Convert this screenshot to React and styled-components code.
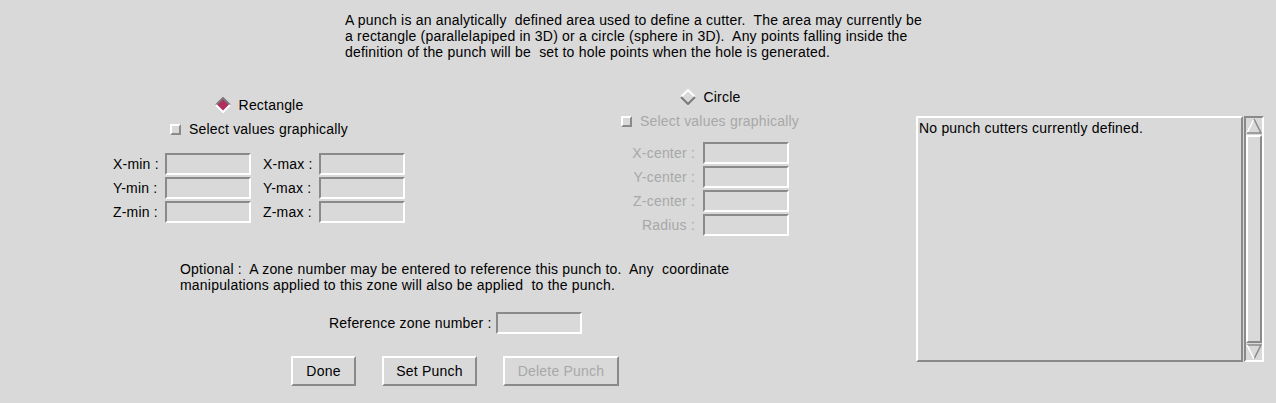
import React from 'react';
import styled, { createGlobalStyle } from 'styled-components';

const GlobalStyle = createGlobalStyle`
  body {
    margin: 0;
    background: #d9d9d9;
    font-family: "Liberation Sans", Arial, sans-serif;
    font-size: 14px;
    letter-spacing: 0.2px;
    color: #000;
  }
`;

const Page = styled.div`
  width: 1276px;
  height: 403px;
  background: #d9d9d9;
  position: relative;
  overflow: hidden;
`;

const Intro = styled.div`
  padding: 12px 0 0 345px;
  line-height: 16px;
  white-space: pre;
`;

const Body = styled.div`
  display: flex;
  margin-top: 29px;
`;

const LeftSide = styled.div`
  width: 916px;
  display: flex;
  flex-direction: column;
`;

const PanelRow = styled.div`
  display: flex;
`;

const Panel = styled.div`
  width: ${p => p.$width}px;
  margin-left: ${p => p.$left}px;
  margin-top: ${p => p.$top}px;
  display: flex;
  flex-direction: column;
  align-items: center;
`;

const ToggleRow = styled.div`
  display: flex;
  align-items: center;
  height: 16px;
  gap: 8px;
  margin-bottom: 8px;
  color: ${p => (p.$dim ? '#a8a8a8' : 'inherit')};
`;

const CheckBox = styled.span`
  width: 7px;
  height: 7px;
  background: #d9d9d9;
  border: 2px solid;
  border-color: #fff #8a8a8a #8a8a8a #fff;
`;

const FieldGrid = styled.div`
  display: grid;
  grid-template-columns: ${p => p.$cols};
  row-gap: 2px;
  align-items: center;
  margin-top: ${p => p.$top}px;
  color: ${p => (p.$dim ? '#a8a8a8' : 'inherit')};
`;

const FieldLabel = styled.span`
  text-align: ${p => (p.$right ? 'right' : 'left')};
  padding-right: ${p => (p.$right ? 8 : 0)}px;
  padding-left: ${p => p.$indent || 0}px;
`;

const Field = styled.div`
  width: 82px;
  height: 18px;
  border: 2px solid;
  border-color: #8a8a8a #fff #fff #8a8a8a;
  background: #d9d9d9;
`;

const Optional = styled.div`
  margin: 25px 0 0 180px;
  line-height: 16px;
  white-space: pre;
`;

const RefRow = styled.div`
  display: flex;
  align-items: center;
  margin: 19px 0 0 329px;
  gap: 4px;
`;

const ButtonRow = styled.div`
  display: flex;
  margin: 22px 0 0 291px;
  gap: 26px;
`;

const Button = styled.div`
  width: ${p => p.$w}px;
  height: 26px;
  box-sizing: content-box;
  border: 2px solid;
  border-color: #fff #8a8a8a #8a8a8a #fff;
  display: flex;
  align-items: center;
  justify-content: center;
  color: ${p => (p.$disabled ? '#a8a8a8' : '#000')};
`;

const ListArea = styled.div`
  display: flex;
  margin-top: 27px;
  gap: 1px;
`;

const ListBox = styled.div`
  width: 322px;
  height: 242px;
  border: 2px solid;
  border-color: #fff #8a8a8a #8a8a8a #fff;
  padding: 0 0 0 1px;
  line-height: 20px;
`;

const ScrollBar = styled.div`
  width: 16px;
  height: 242px;
  border: 2px solid;
  border-color: #8a8a8a #fff #fff #8a8a8a;
  display: flex;
  flex-direction: column;
`;

const Thumb = styled.div`
  flex: 1;
  border: 2px solid;
  border-color: #fff #8a8a8a #8a8a8a #fff;
  margin: 1px 0;
`;

const Diamond = ({ on }) => (
  <svg width="16" height="16" viewBox="0 0 16 16">
    <polygon points="8,1 15,8 8,15 1,8" fill={on ? '#b03060' : '#d9d9d9'} />
    <polyline points="1,8 8,1 15,8" fill="none" stroke={on ? '#7a7a7a' : '#fff'} strokeWidth="2" />
    <polyline points="1,8 8,15 15,8" fill="none" stroke={on ? '#fff' : '#7a7a7a'} strokeWidth="2" />
  </svg>
);

const Arrow = ({ down }) => (
  <svg width="16" height="16" viewBox="0 0 16 16">
    {down ? (
      <>
        <polygon points="1,1 15,1 8,15" fill="#d9d9d9" />
        <polyline points="1,1 15,1 8,15" fill="none" stroke="#8a8a8a" strokeWidth="1.5" />
        <line x1="1" y1="1" x2="8" y2="15" stroke="#fff" strokeWidth="1.5" />
      </>
    ) : (
      <>
        <polygon points="8,1 15,15 1,15" fill="#d9d9d9" />
        <polyline points="1,15 8,1" fill="none" stroke="#fff" strokeWidth="1.5" />
        <polyline points="8,1 15,15 1,15" fill="none" stroke="#8a8a8a" strokeWidth="1.5" />
      </>
    )}
  </svg>
);

const intro =
  'A punch is an analytically  defined area used to define a cutter.  The area may currently be\n' +
  'a rectangle (parallelapiped in 3D) or a circle (sphere in 3D).  Any points falling inside the\n' +
  'definition of the punch will be  set to hole points when the hole is generated.';

const optional =
  'Optional :  A zone number may be entered to reference this punch to.  Any  coordinate\n' +
  'manipulations applied to this zone will also be applied  to the punch.';

export default function App() {
  return (
    <Page>
      <GlobalStyle />
      <Intro>{intro}</Intro>
      <Body>
        <LeftSide>
          <PanelRow>
            <Panel $left={100} $width={318} $top={8}>
              <ToggleRow>
                <Diamond on />
                <span>Rectangle</span>
              </ToggleRow>
              <ToggleRow>
                <CheckBox />
                <span>Select values graphically</span>
              </ToggleRow>
              <FieldGrid $cols="52px 86px 68px 86px" $top={8}>
                <FieldLabel>X-min :</FieldLabel>
                <Field />
                <FieldLabel $indent={12}>X-max :</FieldLabel>
                <Field />
                <FieldLabel>Y-min :</FieldLabel>
                <Field />
                <FieldLabel $indent={12}>Y-max :</FieldLabel>
                <Field />
                <FieldLabel>Z-min :</FieldLabel>
                <Field />
                <FieldLabel $indent={12}>Z-max :</FieldLabel>
                <Field />
              </FieldGrid>
            </Panel>
            <Panel $left={192} $width={200} $top={0}>
              <ToggleRow>
                <Diamond />
                <span>Circle</span>
              </ToggleRow>
              <ToggleRow $dim>
                <CheckBox />
                <span>Select values graphically</span>
              </ToggleRow>
              <FieldGrid $cols="72px 86px" $top={5} $dim>
                <FieldLabel $right>X-center :</FieldLabel>
                <Field />
                <FieldLabel $right>Y-center :</FieldLabel>
                <Field />
                <FieldLabel $right>Z-center :</FieldLabel>
                <Field />
                <FieldLabel $right>Radius :</FieldLabel>
                <Field />
              </FieldGrid>
            </Panel>
          </PanelRow>
          <Optional>{optional}</Optional>
          <RefRow>
            <span>Reference zone number :</span>
            <Field />
          </RefRow>
          <ButtonRow>
            <Button $w={61}>Done</Button>
            <Button $w={91}>Set Punch</Button>
            <Button $w={112} $disabled>Delete Punch</Button>
          </ButtonRow>
        </LeftSide>
        <ListArea>
          <ListBox>No punch cutters currently defined.</ListBox>
          <ScrollBar>
            <Arrow />
            <Thumb />
            <Arrow down />
          </ScrollBar>
        </ListArea>
      </Body>
    </Page>
  );
}
